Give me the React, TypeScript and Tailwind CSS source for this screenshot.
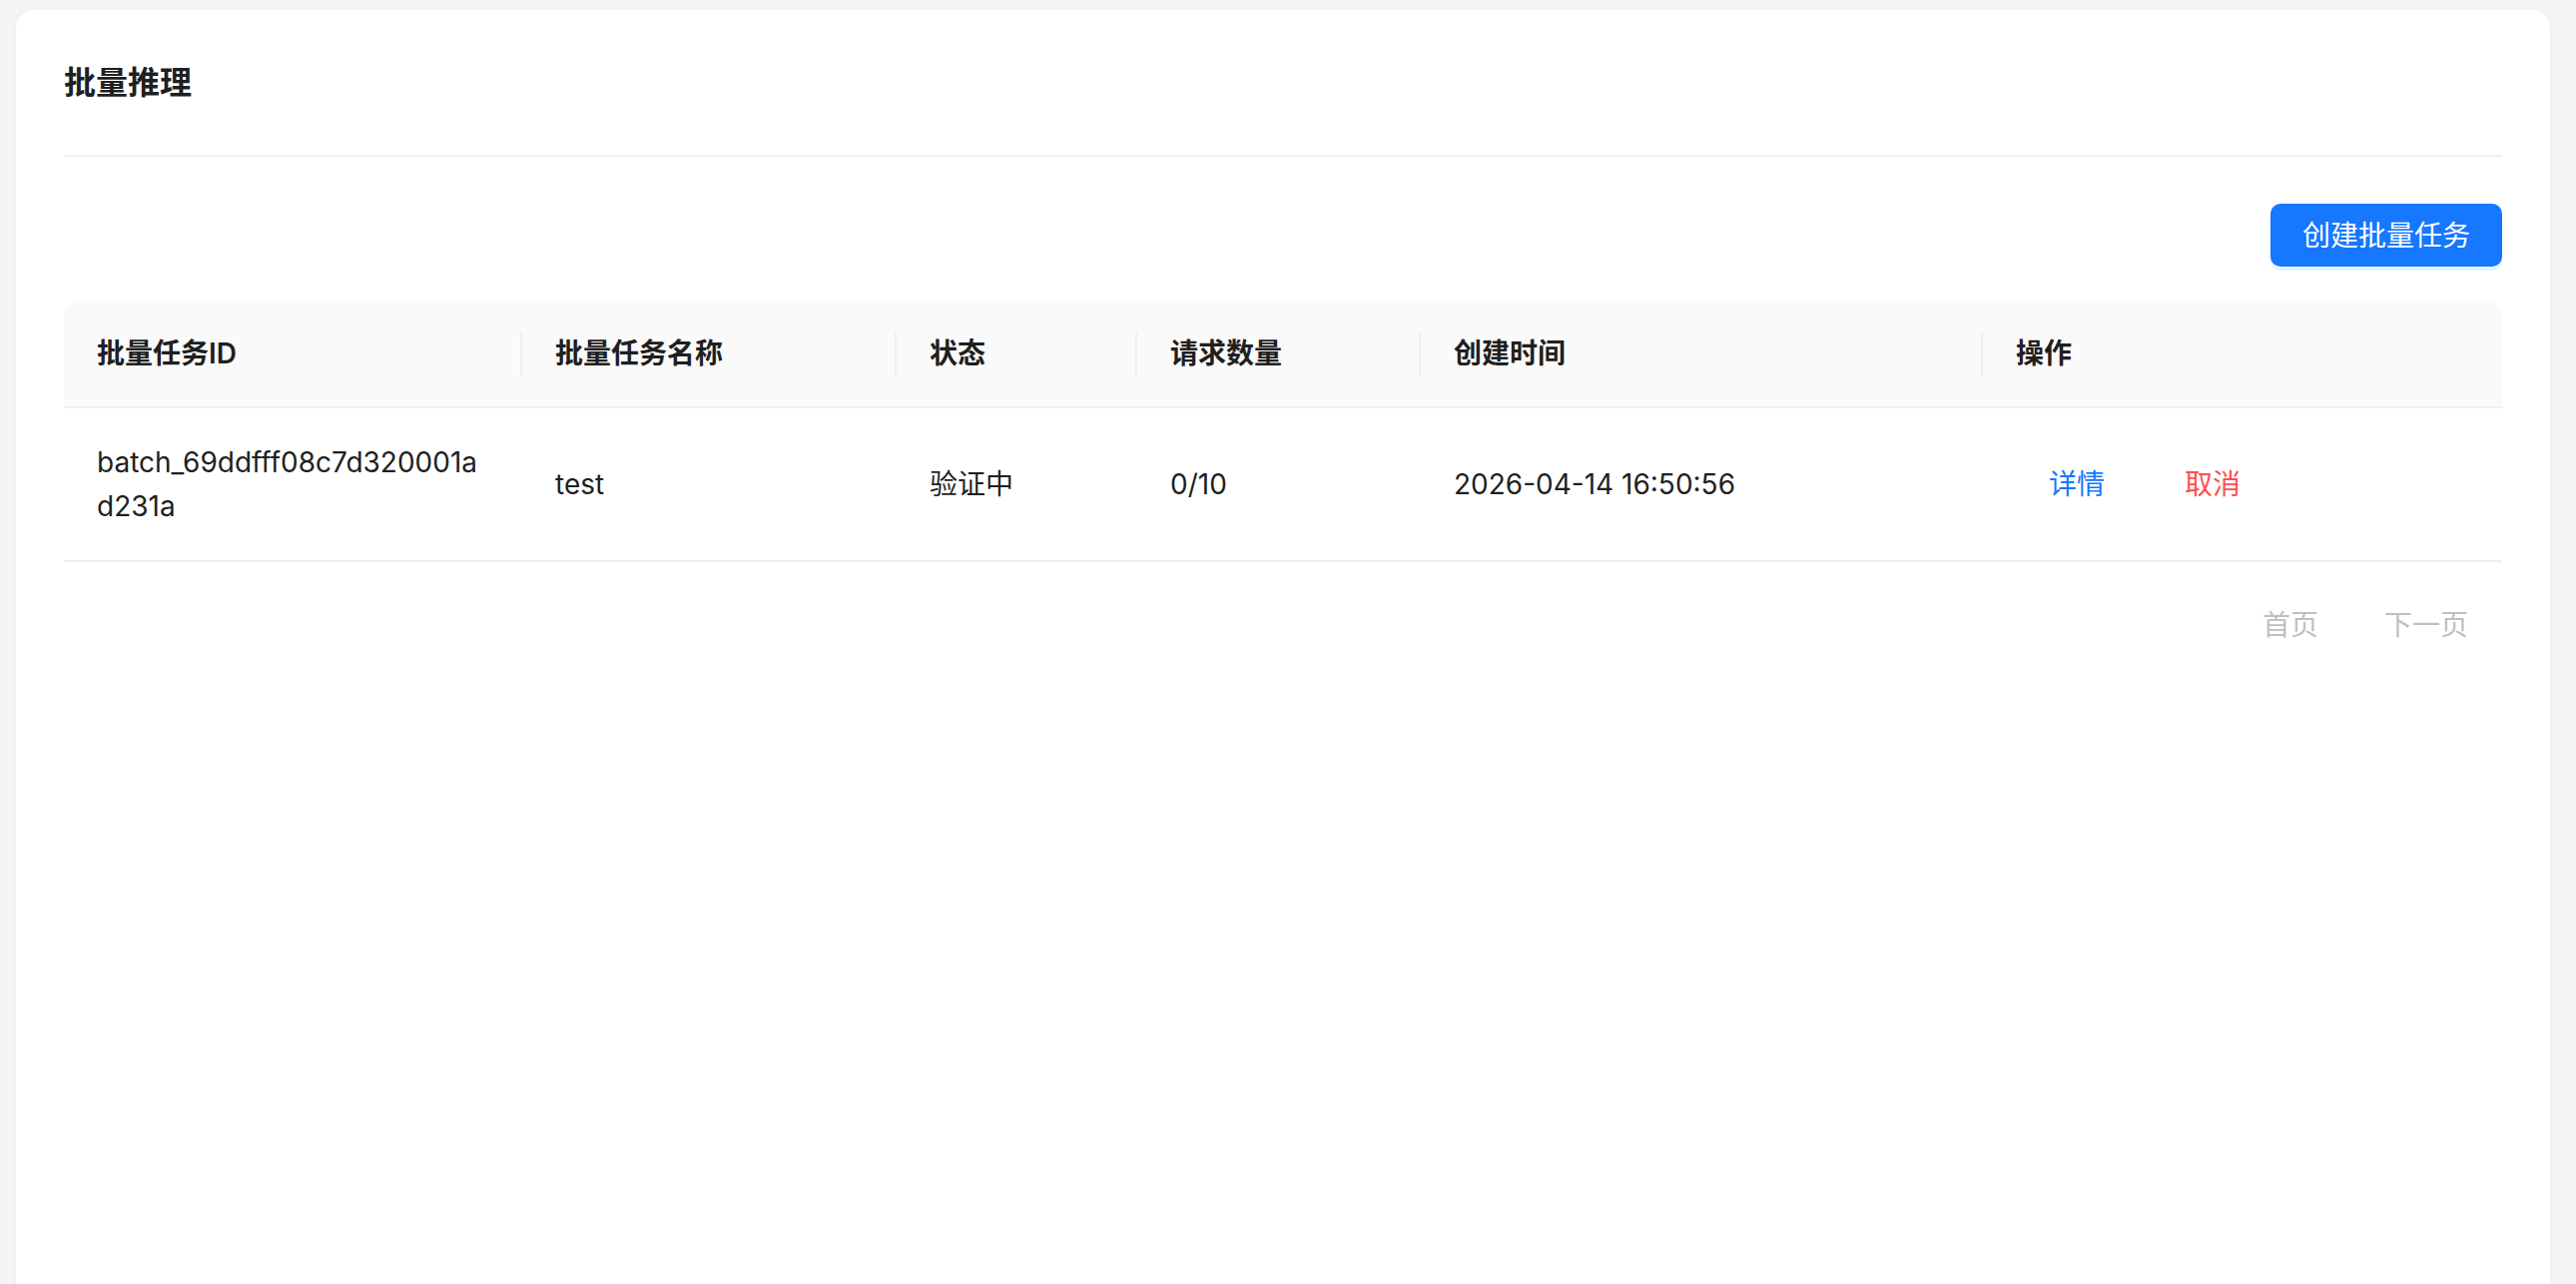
import React from 'react';

// Batch inference list page: title, create button, table and pager

interface BatchJob {
  id: string;
  name: string;
  status: string;
  requests: string;
  createdAt: string;
}

const columns = ['批量任务ID', '批量任务名称', '状态', '请求数量', '创建时间', '操作'];

const jobs: BatchJob[] = [
  {
    id: 'batch_69ddfff08c7d320001ad231a',
    name: 'test',
    status: '验证中',
    requests: '0/10',
    createdAt: '2026-04-14 16:50:56'
  }
];

const fontStack = "font-['Inter','Noto_Sans_CJK_SC',sans-serif]";

const gridCols = 'grid grid-cols-[459px_375px_241px_284px_563px_1fr]';

export default function App() {
  return (
    <div className={`min-h-screen bg-[#f5f5f5] pl-[16px] pr-[26px] pt-[10px] ${fontStack}`}>
      <div className="min-h-[1300px] rounded-[18px] bg-white px-[48px] pt-[50px] shadow-[0_1px_6px_rgba(0,0,0,0.05)]">
        {/* Page title */}
        <h1 className="text-[32px] font-semibold leading-[45px] text-[#1f1f1f]">批量推理</h1>
        <div className="mt-[50px] h-[2px] bg-[#f0f0f0]" />

        {/* Toolbar */}
        <div className="mt-[47px] flex justify-end">
          <button className="h-[63px] rounded-[10px] bg-[#1677ff] px-[32px] text-[28px] text-white shadow-[0_4px_0_rgba(5,145,255,0.1)]">
            创建批量任务
          </button>
        </div>

        {/* Table */}
        <div className="mt-[34px]">
          <div className={`${gridCols} rounded-t-[16px] border-b-2 border-[#f0f0f0] bg-[#fafafa]`}>
            {columns.map((col, index) => (
              <div key={col} className="flex h-[106px] items-center justify-between pl-[33px]">
                <span className="text-[28px] font-semibold leading-[45px] text-[#1f1f1f]">{col}</span>
                {index < columns.length - 1 && <div className="h-[45px] w-[2px] bg-[#f0f0f0]" />}
              </div>
            ))}
          </div>

          {jobs.map((job) => (
            <div
              key={job.id}
              className={`${gridCols} items-center border-b-2 border-[#f0f0f0] text-[28px] leading-[44px] text-[#1f1f1f]`}
            >
              <div className="break-all py-[32px] pl-[33px] pr-[36px]">{job.id}</div>
              <div className="px-[33px]">{job.name}</div>
              <div className="px-[33px]">{job.status}</div>
              <div className="px-[33px]">{job.requests}</div>
              <div className="px-[33px]">{job.createdAt}</div>
              <div className="flex gap-[14px] px-[33px]">
                <button className="px-[33px] text-[#1677ff]">详情</button>
                <button className="px-[33px] text-[#ff4d4f]">取消</button>
              </div>
            </div>
          ))}

          {/* Pagination */}
          <div className="mt-[40px] flex justify-end pr-[1px]">
            <button className="h-[45px] px-[33px] text-[28px] text-[#bfbfbf]" disabled>
              首页
            </button>
            <button className="h-[45px] px-[33px] text-[28px] text-[#bfbfbf]" disabled>
              下一页
            </button>
          </div>
        </div>
      </div>
    </div>
  );
}
